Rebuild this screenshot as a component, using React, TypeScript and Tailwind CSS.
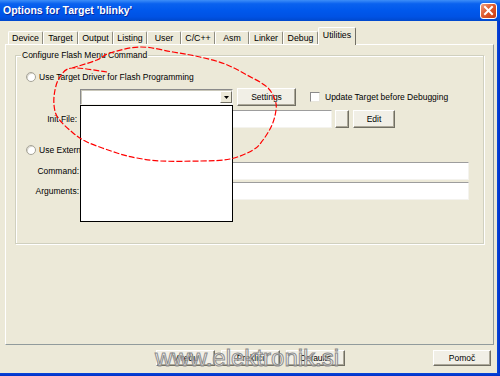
import React from "react";

type P = [number, number];

function smoothPath(p: P[]): string {
  let d = `M${p[0][0]},${p[0][1]}`;
  for (let i = 0; i < p.length - 1; i++) {
    const p0 = p[i - 1] || p[i];
    const p1 = p[i];
    const p2 = p[i + 1];
    const p3 = p[i + 2] || p2;
    const c1x = p1[0] + (p2[0] - p0[0]) / 6;
    const c1y = p1[1] + (p2[1] - p0[1]) / 6;
    const c2x = p2[0] - (p3[0] - p1[0]) / 6;
    const c2y = p2[1] - (p3[1] - p1[1]) / 6;
    d += ` C${c1x.toFixed(1)},${c1y.toFixed(1)} ${c2x.toFixed(1)},${c2y.toFixed(1)} ${p2[0]},${p2[1]}`;
  }
  return d;
}

const ellipsePts: P[] = [
  [72, 68], [97, 60], [110, 53], [140, 47], [173, 52], [200, 57], [225, 64], [247, 75],
  [267, 87], [275, 100], [276, 110], [272, 125], [263, 140], [253, 150], [230, 159],
  [200, 161], [160, 161], [137, 158], [117, 153], [87, 142], [72, 132], [58, 118],
  [54, 105], [55, 90], [60, 77], [72, 68], [107, 72],
];

const btn =
  "flex items-center justify-center bg-[#F1EFE6] border border-t-white border-l-white border-r-[#716F64] border-b-[#716F64] shadow-[inset_-1px_-1px_0_#ACA899] text-[8.5px] leading-none text-black";
const inp =
  "bg-white border border-t-[#9D9D9D] border-l-[#9D9D9D] border-r-[#F4F3EE] border-b-[#F4F3EE]";

function Radio() {
  return (
    <div className="w-[10px] h-[10px] rounded-full bg-white border border-[#A5A397] shadow-[inset_1px_1px_0_#D8D6CC]" />
  );
}

const tabs: { label: string; w: string; sel?: boolean }[] = [
  { label: "Device", w: "w-[35px]" },
  { label: "Target", w: "w-[35px]" },
  { label: "Output", w: "w-[35px]" },
  { label: "Listing", w: "w-[34px]" },
  { label: "User", w: "w-[34px]" },
  { label: "C/C++", w: "w-[34px]" },
  { label: "Asm", w: "w-[34px]" },
  { label: "Linker", w: "w-[34px]" },
  { label: "Debug", w: "w-[35px]" },
  { label: "Utilities", w: "w-[38px]", sel: true },
];

export default function App() {
  return (
    <div className="relative w-[500px] h-[376px] overflow-hidden bg-[#ECE9D8] font-['Liberation_Sans',Arial,sans-serif] text-black flex flex-col">
      {/* Title bar */}
      <div className="h-[21px] shrink-0 flex items-center justify-between pl-[3px] pr-[3px] bg-[linear-gradient(180deg,#3D8EF8_0%,#0A62EF_18%,#0058EC_50%,#0052E4_80%,#0048CC_100%)]">
        <span className="text-white font-bold text-[10.5px] leading-none [text-shadow:1px_1px_0_#0A2A9F]">
          Options for Target 'blinky'
        </span>
        <div className="w-[17px] h-[16px] rounded-[3px] border border-white bg-[linear-gradient(135deg,#F0A080_0%,#DE5C30_45%,#C83C12_100%)] flex items-center justify-center">
          <svg width="11" height="11" viewBox="0 0 11 11">
            <path d="M2 2 L9 9 M9 2 L2 9" stroke="#fff" strokeWidth="2" strokeLinecap="square" />
          </svg>
        </div>
      </div>

      <div className="flex flex-1 min-h-0">
        <div className="flex-1 flex flex-col">
          {/* Tabs */}
          <div className="h-[23px] shrink-0 pt-[6px] pl-[8px] flex items-end">
            {tabs.map((t) =>
              t.sel ? (
                <div
                  key={t.label}
                  className={`${t.w} relative z-10 h-[18px] -mb-px pb-[2px] bg-[#ECE9D8] flex items-center justify-center text-[8.8px] leading-none border-t border-l border-r border-t-white border-l-white border-r-[#716F64] rounded-t-[2px]`}
                >
                  {t.label}
                </div>
              ) : (
                <div
                  key={t.label}
                  className={`${t.w} h-[13px] flex items-center justify-center text-[8.8px] leading-none border-t border-l border-r border-t-white border-l-white border-r-[#8E8C80] rounded-t-[2px]`}
                >
                  {t.label}
                </div>
              )
            )}
          </div>

          {/* Panel */}
          <div className="ml-[5px] w-[489px] h-[301px] shrink-0 border border-t-white border-l-white border-r-[#919B9C] border-b-[#919B9C] flex flex-col">
            <div className="relative ml-[9px] mt-[10px] w-[469px] h-[189px] border border-[#D0D0BF] shadow-[inset_1px_1px_0_#fff,1px_1px_0_#fff] flex flex-col pt-[16px] text-[8.5px] leading-none">
              <span className="absolute left-[5px] -top-[6px] px-[1px] bg-[#ECE9D8] leading-[10px]">
                Configure Flash Menu Command
              </span>

              {/* Row 1 */}
              <div className="h-[10px] flex items-center pl-[10px]">
                <Radio />
                <span className="ml-[3px]">Use Target Driver for Flash Programming</span>
              </div>

              {/* Row 2 */}
              <div className="mt-[6px] h-[18px] flex items-center pl-[64px]">
                <div className="relative w-[153px] h-[16px] bg-white border border-t-[#8A8A8A] border-l-[#8A8A8A] border-r-[#F4F3EE] border-b-[#F4F3EE] shadow-[inset_1px_1px_0_#C9C7BA]">
                  <div className="absolute right-0 top-[1px] w-[12px] h-[12px] bg-[#ECE9D8] border border-t-white border-l-white border-r-[#716F64] border-b-[#716F64] flex items-center justify-center">
                    <svg width="5" height="3" viewBox="0 0 5 3">
                      <path d="M0 0 L5 0 L2.5 3 Z" fill="#000" />
                    </svg>
                  </div>
                  <div className="absolute left-[-1px] top-[15px] w-[153px] h-[117px] z-10 bg-white border border-black" />
                </div>
                <div className={`${btn} ml-[4px] w-[59px] h-[18px]`}>Settings</div>
                <div className="ml-[14px] w-[10px] h-[10px] bg-white border border-t-[#8A8A8A] border-l-[#8A8A8A] border-r-[#E8E6DC] border-b-[#E8E6DC]" />
                <span className="ml-[5px]">Update Target before Debugging</span>
              </div>

              {/* Row 3 */}
              <div className="mt-[4px] h-[18px] flex items-center">
                <span className="w-[64px] pr-[3px] text-right">Init File:</span>
                <div className={`${inp} w-[252px] h-[18px]`} />
                <div className={`${btn} ml-[3px] w-[14px] h-[18px]`}></div>
                <div className={`${btn} ml-[4px] w-[42px] h-[18px]`}>Edit</div>
              </div>

              {/* Row 4 */}
              <div className="mt-[17px] h-[10px] flex items-center pl-[10px]">
                <Radio />
                <span className="ml-[3px]">Use External Tool for Flash Programming</span>
              </div>

              {/* Row 5 */}
              <div className="mt-[7px] h-[18px] flex items-center">
                <span className="w-[64px] pr-[1px] text-right">Command:</span>
                <div className={`${inp} w-[389px] h-[18px]`} />
              </div>

              {/* Row 6 */}
              <div className="mt-[2px] h-[18px] flex items-center">
                <span className="w-[64px] pr-[1px] text-right">Arguments:</span>
                <div className={`${inp} w-[389px] h-[18px]`} />
              </div>
            </div>
          </div>

          {/* Bottom buttons */}
          <div className="mt-[5px] h-[16px] flex pl-[156px]">
            <div className={`${btn} w-[59px] h-[16px]`}>V redu</div>
            <div className={`${btn} ml-[6px] w-[59px] h-[16px]`}>Prekliči</div>
            <div className={`${btn} ml-[6px] w-[59px] h-[16px]`}>Defaults</div>
            <div className={`${btn} ml-[88px] w-[58px] h-[16px]`}>Pomoč</div>
          </div>
        </div>
        <div className="w-[3px] bg-[linear-gradient(90deg,#0847D9,#0030C8)]" />
      </div>
      <div className="h-[3px] shrink-0 bg-[linear-gradient(180deg,#0847D9,#0030C8)]" />

      {/* Watermark */}
      <div className="absolute left-[155px] top-[346px] z-20 pointer-events-none text-[24px] leading-none text-white/50 [-webkit-text-stroke:1px_#8C8C8C]">
        www.elektronik.si
      </div>

      {/* Red annotation ellipse */}
      <svg
        className="absolute left-0 top-0 z-30 pointer-events-none"
        width="500"
        height="376"
        viewBox="0 0 500 376"
      >
        <path
          d={smoothPath(ellipsePts)}
          fill="none"
          stroke="#FF0000"
          strokeWidth="1.2"
          strokeDasharray="6 2"
        />
      </svg>
    </div>
  );
}
